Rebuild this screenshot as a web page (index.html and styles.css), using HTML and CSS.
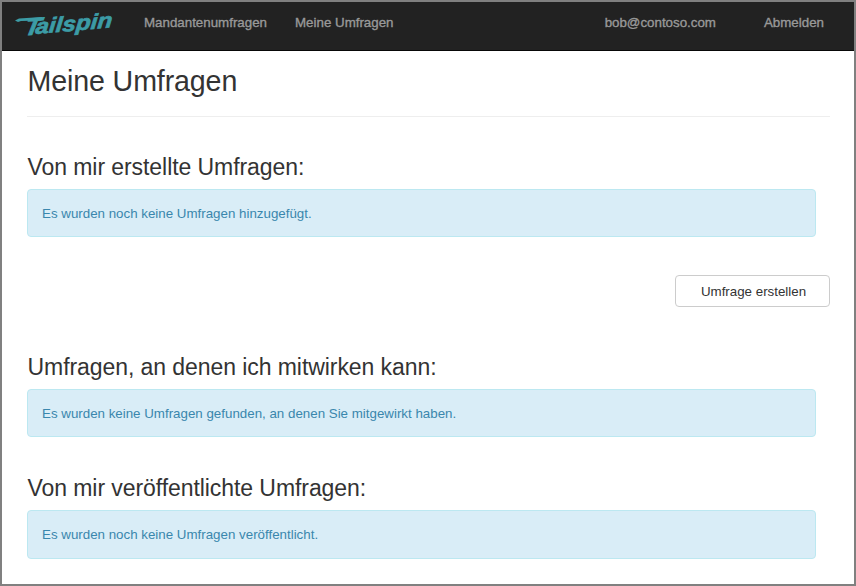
FILE: index.html
```html
<!DOCTYPE html>
<html lang="de">
<head>
<meta charset="utf-8">
<title>Meine Umfragen</title>
<link rel="stylesheet" href="styles.css">
</head>
<body>
<header class="navbar">
  <a class="brand" aria-label="Tailspin">
    <svg width="102" height="32" viewBox="0 0 102 32">
      <path d="M1 12.5 L5 10.6 L28 9 L27.4 12.4 L7 13 L4 14 Z"/>
      <text class="logo-t" transform="translate(9.5 27.5) rotate(-4) skewX(-15)" textLength="16" lengthAdjust="spacingAndGlyphs">T</text>
      <text class="logo-rest" transform="translate(21 26) rotate(-5) skewX(-10)" textLength="77" lengthAdjust="spacingAndGlyphs">ailspin</text>
    </svg>
  </a>
  <nav class="links">
    <a>Mandantenumfragen</a>
    <a>Meine Umfragen</a>
  </nav>
  <div class="account">
    <a>bob@contoso.com</a>
    <a>Abmelden</a>
  </div>
</header>
<main>
  <h1>Meine Umfragen</h1>
  <section class="created">
    <h2>Von mir erstellte Umfragen:</h2>
    <div class="alert">Es wurden noch keine Umfragen hinzugefügt.</div>
    <button class="create" type="button">Umfrage erstellen</button>
  </section>
  <section class="contribute">
    <h2>Umfragen, an denen ich mitwirken kann:</h2>
    <div class="alert">Es wurden keine Umfragen gefunden, an denen Sie mitgewirkt haben.</div>
  </section>
  <section class="published">
    <h2>Von mir veröffentlichte Umfragen:</h2>
    <div class="alert tall">Es wurden noch keine Umfragen veröffentlicht.</div>
  </section>
</main>
</body>
</html>
```
FILE: styles.css
```css
* { box-sizing: border-box; }
html, body { height: 100%; }
body {
  margin: 0;
  border: 2px solid #808080;
  background: #fff;
  color: #333;
  font: 13.33px/20px "Liberation Sans", Arial, sans-serif;
  overflow: hidden;
}
.navbar {
  display: flex;
  height: 49px;
  padding: 0 30px 0 12px;
  background: #222;
  border-bottom: 1px solid #080808;
  color: #999;
  -webkit-text-stroke: .35px #999;
}
.brand { width: 102px; height: 32px; margin-top: 6px; -webkit-text-stroke: 0; }
.brand svg { display: block; fill: #3c9ca6; overflow: visible; }
.logo-t, .logo-rest {
  font-family: "Liberation Sans", Arial, sans-serif;
  font-weight: bold;
  font-style: italic;
  stroke: #3c9ca6;
  stroke-width: .7px;
}
.logo-t { font-size: 24px; }
.logo-rest { font-size: 21px; }
.links, .account { display: flex; padding-top: 11px; }
.links { gap: 28px; margin-left: 28px; }
.account { gap: 48px; margin-left: auto; }
main { padding: 0 24px 0 25px; }
h1, h2 { margin: 0; font-weight: normal; text-indent: .5px; }
h1 { height: 66px; padding-top: 14px; border-bottom: 1px solid #eee; font-size: 28.6px; line-height: 32px; letter-spacing: -.12px; }
h2 { font-size: 23px; line-height: 26px; margin-bottom: 9px; letter-spacing: -.07px; }
.created { display: flex; flex-direction: column; padding-top: 37px; }
.contribute { padding-top: 47px; }
.published { padding-top: 38px; }
.alert {
  height: 48px;
  margin-right: 14px;
  padding: 14px;
  border: 1px solid #bce8f1;
  border-radius: 4px;
  background: #d9edf7;
  color: #3a87ad;
}
.tall { height: 49px; }
.create {
  align-self: flex-end;
  width: 155px;
  height: 32px;
  margin-top: 38px;
  padding: 2px 0 0 2px;
  border: 1px solid #ccc;
  border-radius: 4px;
  background: #fff;
  color: #333;
  font: inherit;
}
```
